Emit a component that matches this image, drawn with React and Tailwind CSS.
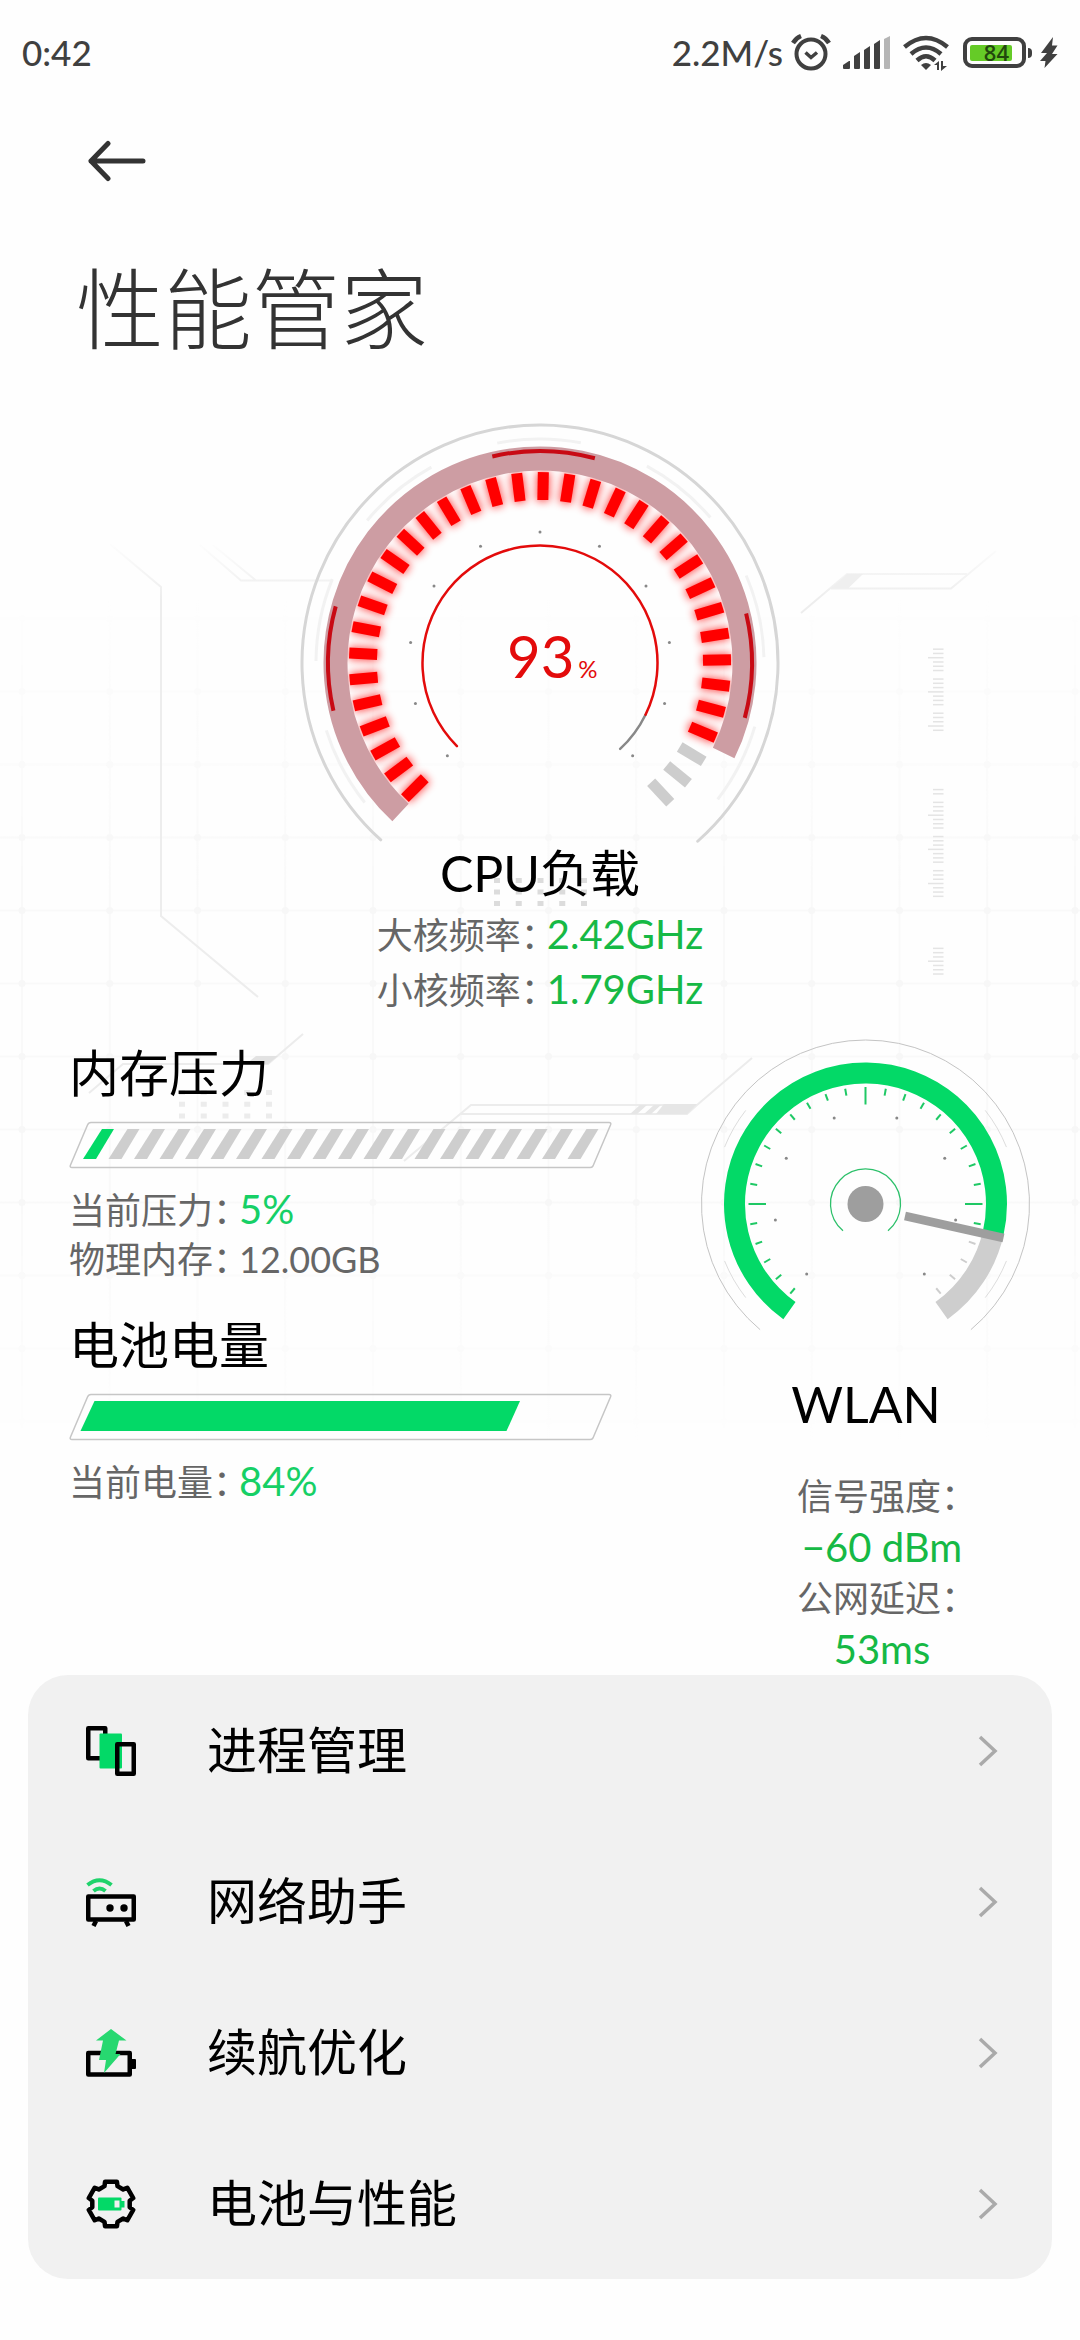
import React from 'react';

// angle in degrees, clockwise from twelve o'clock
const polar = (cx, cy, r, deg) => {
    const rad = ((deg - 90) * Math.PI) / 180;
    return [cx + r * Math.cos(rad), cy + r * Math.sin(rad)];
};

const arc = (cx, cy, r, from, to) => {
    const [x1, y1] = polar(cx, cy, r, from);
    const [x2, y2] = polar(cx, cy, r, to);
    return `M${x1} ${y1}A${r} ${r} 0 ${to - from > 180 ? 1 : 0} 1 ${x2} ${y2}`;
};

const range = (n) => Array.from({ length: n }, (_, i) => i);

const StatusBar = () => (
    <div className="flex h-[107px] items-center justify-between px-[22px] pb-0.5 text-[35px] font-medium text-[#404040]">
        <time>0:42</time>
        <div className="flex items-center">
            <span>2.2M/s</span>
            <svg className="ml-2 h-10 w-10" viewBox="0 0 40 40" fill="none" stroke="currentColor" strokeWidth="4">
                <circle cx="20" cy="21" r="14.5" />
                <path d="M14.5 19.5l5.5 5 6-5" strokeWidth="3.5" />
                <path d="M2 10q3-5 8-7M38 10q-3-5-8-7" strokeWidth="4.5" />
            </svg>
            <svg className="ml-3 h-[34px] w-[48px]" viewBox="0 0 48 34" fill="currentColor">
                <path d="M0 32v-3l6-4h1v7q0 1-1 1H1q-1 0-1-1z" />
                <path d="M11 20l6-4v16q0 1-1 1h-4q-1 0-1-1z" />
                <path d="M21 14l6-4v22q0 1-1 1h-4q-1 0-1-1z" />
                <path d="M31 8l6-4v28q0 1-1 1h-4q-1 0-1-1z" />
                <path d="M41 3l6-3v32q0 1-1 1h-4q-1 0-1-1z" fill="#b5b5b5" />
            </svg>
            <svg className="ml-3 h-[36px] w-[46px]" viewBox="0 0 46 36" fill="none" stroke="currentColor" strokeWidth="4.5">
                <path d="M1.500 12Q23-6 44.500 12" />
                <path d="M8 19Q23 6 38 19" />
                <path d="M14 25.500Q23 17 32 25.500" />
                <path d="M18 30q5-4 10 0l-5 5z" fill="currentColor" stroke="none" />
                <path d="M31 30l5-4v9h-2v-5zM38 26h2v5h4l-6 5z" fill="currentColor" stroke="none" />
            </svg>
            <div className="ml-[14px] flex h-[31px] w-[63px] items-center rounded-[9px] border-4 border-[#404040] p-[3px]">
                <div className="flex h-4 w-[42px] items-center justify-end rounded-[2px] bg-[#65cb27] pr-[3px] font-['Open_Sans'] text-[22px] font-semibold text-[#22480d]">
                    84
                </div>
            </div>
            <div className="ml-[2px] h-2.5 w-1 rounded-r bg-[#404040]"></div>
            <svg className="ml-2 h-[31px] w-[18px]" viewBox="0 0 18 31" fill="currentColor">
                <path d="M13 0L1 16h6L0 24h5.500L4.500 31 17.500 17H12l5.500-8.500H12z" />
            </svg>
        </div>
    </div>
);

const Backdrop = () => {
    const cols = range(13).map((i) => 22 + i * 87.75);
    const rows = range(12).map((i) => 618.500 + i * 73);
    // [first y, last y] of every ruler run, y of one of its long ticks
    const runs = [
        [649, 731, 657.700],
        [789, 897, 815.200],
        [948, 975, 961.200],
    ];
    const step = 4.270;
    const ticks = runs.flatMap(([top, bottom, long]) =>
        range(60)
            .map((i) => i - 30)
            .map((i) => ({ k: ((i % 8) + 8) % 8, y: long + i * step }))
            .filter(({ k, y }) => k !== 4 && y >= top - 1 && y <= bottom + 1)
    );

    return (
        <svg className="absolute left-0 top-0 w-full" viewBox="0 372 1080 1100" fill="none" aria-hidden="true">
            <defs>
                <linearGradient id="fade" x1="0" y1="590" x2="0" y2="1450" gradientUnits="userSpaceOnUse">
                    <stop offset="0" stopColor="#fff" stopOpacity="0" />
                    <stop offset="0.35" stopColor="#fff" />
                    <stop offset="0.7" stopColor="#fff" />
                    <stop offset="1" stopColor="#fff" stopOpacity="0" />
                </linearGradient>
                <mask id="gridMask" maskUnits="userSpaceOnUse" x="0" y="560" width="1080" height="900">
                    <rect x="0" y="560" width="1080" height="900" fill="url(#fade)" />
                </mask>
                <linearGradient id="lineFade" x1="0" y1="540" x2="0" y2="600" gradientUnits="userSpaceOnUse">
                    <stop offset="0" stopColor="#ededed" stopOpacity="0" />
                    <stop offset="1" stopColor="#ededed" />
                </linearGradient>
            </defs>
            <g mask="url(#gridMask)" stroke="#f9f9f9" strokeWidth="2">
                {cols.map((x) => <path key={x} d={`M${x} 600V1440`} />)}
                {rows.map((y) => <path key={y} d={`M0 ${y}H1080`} />)}
                {cols.map((x) => rows.map((y) => <circle key={`${x}-${y}`} cx={x} cy={y} r="3.500" fill="#f7f7f7" stroke="none" />))}
            </g>
            <g stroke="url(#lineFade)" strokeWidth="2">
                <path d="M110 544L161 587V916L258 997" />
                <path d="M200 545L241 580.500H333M213 545L256 580.500" />
                <path d="M801 613L847 574H967M831 588.500H951L996 551" />
            </g>
            <path d="M831 588.500L847 574H863L848 588.500z" fill="#efefef" />
            <g stroke="#ececec" strokeWidth="2">
                <path d="M303 1034L268 1064H123L89 1093" />
                <path d="M404 1161L471 1105H697L752 1058M461 1114H687L697 1105" />
            </g>
            <path d="M256 1056H278L268 1064H246z" fill="#e2e2e2" />
            <path d="M630 1114L640 1105H647L637 1114zM644 1114L654 1105H661L651 1114zM656 1114L664 1104H697L687 1114z" fill="#e6e6e6" />
            {ticks.map(({ k, y }) => (
                <path key={y} d={`M${k === 0 ? 928 : 933} ${y}H943.500`} stroke="#e4e4e4" strokeWidth="1.500" />
            ))}
            {range(15).map((i) => (
                <React.Fragment key={i}>
                    <rect x={494 + (i % 5) * 21.75} y={878 + Math.floor(i / 5) * 11.5} width="6" height="5" fill="#dcdcdc" />
                    <rect x={179 + (i % 5) * 21.75} y={1090 + Math.floor(i / 5) * 11.75} width="6" height="5" fill="#ececec" />
                </React.Fragment>
            ))}
        </svg>
    );
};

const CpuGauge = ({ load }) => {
    const cx = 540;
    const cy = 663;
    const ticks = range(35).map((i) => -135 + i * 8);
    const end = -135 + 270 * (load / 100);
    const faint = [[-128.5, -107.5], [-89.5, -68], [-50.5, -29], [-11, 10.5], [28.5, 49.5], [67, 88.5], [106.5, 127.5]];

    return (
        <div className="relative">
            <svg className="w-[480px]" viewBox="300 423 480 420" fill="none" aria-hidden="true">
                <defs>
                    <filter id="glow" x="300" y="423" width="480" height="420" filterUnits="userSpaceOnUse">
                        <feGaussianBlur stdDeviation="4" />
                    </filter>
                </defs>
                <path d={arc(cx, cy, 238, -138, 138.5)} stroke="#d6d6d6" strokeWidth="3" strokeLinecap="round" />
                {faint.map(([a, b]) => <path key={a} d={arc(cx, cy, 224, a, b)} stroke="#f2f2f2" strokeWidth="3" />)}
                <g filter="url(#glow)" stroke="#ff0000" strokeWidth="13" opacity="0.7">
                    {ticks.slice(0, 32).map((a) => (
                        <path key={a} d={`M${polar(cx, cy, 162, a)}L${polar(cx, cy, 191, a)}`} />
                    ))}
                </g>
                <path d={arc(cx, cy, 204.500, -137, end)} stroke="#cd9da3" strokeWidth="24" />
                {[[-103, -74.5], [-13, 15], [76.5, 105]].map(([a, b]) => (
                    <path key={a} d={arc(cx, cy, 212, a, b)} stroke="#c80a14" strokeWidth="4" />
                ))}
                {ticks.map((a, i) => (
                    <path key={a} d={`M${polar(cx, cy, 163, a)}L${polar(cx, cy, 191, a)}`} stroke={i < 32 ? '#ff0000' : '#cdcdcd'} strokeWidth="11" />
                ))}
                <path d={arc(cx, cy, 117.500, end, 137)} stroke="#888888" strokeWidth="2.500" strokeLinecap="round" />
                <path d={arc(cx, cy, 117.500, -135, end)} stroke="#e30b0b" strokeWidth="2.500" strokeLinecap="round" />
                {range(11).map((i) => {
                    const [x, y] = polar(cx, cy, 131, -135 + i * 27);
                    return <circle key={i} cx={x} cy={y} r="1.500" fill="#888888" />;
                })}
            </svg>
            <p className="absolute left-[207px] top-[198px] flex items-baseline gap-1 text-[58px] leading-[70px] text-[#e30b0b]">
                {load}
                <span className="text-[24px]">%</span>
            </p>
        </div>
    );
};

const WlanGauge = () => {
    const cx = 865.5;
    const cy = 1204;
    return (
        <svg className="w-[332px]" viewBox="700 1039 332 293" fill="none" aria-hidden="true">
            <path d={arc(cx, cy, 164, -140, 140)} stroke="#c4c4c4" strokeWidth="1" />
            {[[-128, -112], [-68, -52], [52, 68], [112, 128]].map(([a, b]) => (
                <path key={a} d={arc(cx, cy, 152, a, b)} stroke="#dddddd" strokeWidth="1" />
            ))}
            <path d={arc(cx, cy, 131, 102, 144.5)} stroke="#cecece" strokeWidth="21" />
            <path d={arc(cx, cy, 131, -144.5, 103)} stroke="#03d967" strokeWidth="21" />
            {range(29).map((i) => {
                const a = -140 + i * 10;
                const inner = a % 90 === 0 ? 99.5 : 110;
                return (
                    <path key={a} d={`M${polar(cx, cy, inner, a)}L${polar(cx, cy, 117, a)}`} stroke={a > 100 ? '#cdcdcd' : '#1fc865'} strokeWidth="2" />
                );
            })}
            {[-140, -100, -60, -20, 20, 60, 100, 140].map((a) => {
                const [x, y] = polar(cx, cy, 91.5, a);
                return <circle key={a} cx={x} cy={y} r="1.500" fill="#888888" />;
            })}
            <circle cx={cx} cy={cy} r="18" fill="#9e9e9e" />
            <path d={arc(cx, cy, 35, -140, 140)} stroke="#2cc06a" strokeWidth="1.250" />
            <path d="M905 1216L1003.500 1238" stroke="#9e9e9e" strokeWidth="8.500" />
        </svg>
    );
};

const BarFrame = ({ children }) => (
    <svg className="mt-[18px] w-[544px]" viewBox="69 0 544 48" fill="none" aria-hidden="true">
        <path d="M91 1.500H609Q611.500 1.500 610.500 4L593 45Q592 46.500 590 46.500H72Q69.500 46.500 70.500 44L87.500 4Q88.500 1.500 91 1.500z" stroke="#c6c6c6" strokeWidth="1.500" />
        {children}
    </svg>
);

const Label = ({ children }) => (
    <dt className="pr-2 text-[36px] text-[#666666] [font-feature-settings:'halt']">{children}：</dt>
);

const Heading = ({ children }) => <h2 className="text-[50px] leading-[60px] text-black">{children}</h2>;

const gear = range(6)
    .flatMap((i) => [polar(25, 25, 19, i * 60 - 20), polar(25, 25, 23, i * 60 - 15), polar(25, 25, 23, i * 60 + 15), polar(25, 25, 19, i * 60 + 20)])
    .join(' ');

const menu = [
    {
        name: '进程管理',
        icon: (
            <>
                <rect x="2.250" y="2.250" width="17" height="30" />
                <rect x="13.500" y="7.500" width="22.500" height="35" rx="1" fill="#03d967" stroke="none" />
                <rect x="31.250" y="18.250" width="16.500" height="29.500" />
            </>
        ),
    },
    {
        name: '网络助手',
        icon: (
            <>
                <path d="M1.500 8Q13.500-1.500 25.500 8M7.500 14Q13.500 9 19.500 14" stroke="#1fd36b" strokeWidth="4" />
                <rect x="2.250" y="19.500" width="45.500" height="23" />
                <path d="M10 44L7.500 49M40 44L42.500 49" />
                <circle cx="24" cy="31" r="3.700" fill="#000" stroke="none" />
                <circle cx="38" cy="31" r="3.700" fill="#000" stroke="none" />
            </>
        ),
    },
    {
        name: '续航优化',
        icon: (
            <>
                <rect x="2.250" y="25" width="41.500" height="21.500" />
                <rect x="45" y="31" width="5" height="10" rx="1" fill="#000" stroke="none" />
                <path d="M25 1L40.500 12.500H33L29.500 26H34.500L18 45L20 32H13L17 12.500H10z" fill="#27d870" stroke="none" />
            </>
        ),
    },
    {
        name: '电池与性能',
        icon: (
            <>
                <polygon points={gear} />
                <rect x="12" y="18.500" width="23.500" height="13" rx="1" fill="#03d967" stroke="none" />
                <rect x="35" y="22" width="3.500" height="6.500" fill="#03d967" stroke="none" />
                <rect x="28.500" y="21.500" width="5" height="7" fill="#f1f1f1" stroke="none" />
            </>
        ),
    },
];

const App = () => {
    return (
        <div className="min-h-screen bg-[#fefefe] pb-[61px] font-['Lato','Noto_Sans_CJK_SC',sans-serif]">
            <StatusBar />
            <header className="px-20">
                <button type="button" aria-label="返回" className="flex h-[107px] items-center px-2">
                    <svg className="h-11 w-[58px]" viewBox="0 0 58 44" fill="none" stroke="#333333" strokeWidth="5" strokeLinecap="round" strokeLinejoin="round">
                        <path d="M55 22H3M20 4.500L3 22l17 17.500" />
                    </svg>
                </button>
                <h1 className="-ml-1 mt-[30px] text-[88px] font-light leading-[128px] text-[#333333]">性能管家</h1>
            </header>

            <main className="relative">
                <Backdrop />
                <section className="relative flex flex-col items-center pt-[51px]">
                    <CpuGauge load={93} />
                    <Heading>CPU负载</Heading>
                    <dl className="mt-1 text-[40px] leading-[55px] text-[#16b945]">
                        <div className="flex h-[55px] items-baseline">
                            <Label>大核频率</Label>
                            <dd>2.42GHz</dd>
                        </div>
                        <div className="flex h-[55px] items-baseline">
                            <Label>小核频率</Label>
                            <dd>1.79GHz</dd>
                        </div>
                    </dl>
                </section>

                <div className="relative mt-[22px] flex items-start justify-between pl-[69px] pr-12">
                    <div className="pt-1">
                        <section>
                            <Heading>内存压力</Heading>
                            <BarFrame>
                                {range(20).map((i) => {
                                    const x = 83 + i * 25.5;
                                    return <path key={i} d={`M${x} 38L${x + 19} 8H${x + 31}L${x + 13} 38z`} fill={i < 1 ? '#03d967' : '#cecece'} />;
                                })}
                            </BarFrame>
                            <dl className="mt-[15px] leading-[50px]">
                                <div className="flex h-[50px] items-baseline">
                                    <Label>当前压力</Label>
                                    <dd className="text-[40px] text-[#16d066]">5%</dd>
                                </div>
                                <div className="flex h-[50px] items-baseline">
                                    <Label>物理内存</Label>
                                    <dd className="text-[36px] text-[#666666]">12.00GB</dd>
                                </div>
                            </dl>
                        </section>
                        <section className="mt-[31px]">
                            <Heading>电池电量</Heading>
                            <BarFrame>
                                <path d="M80.500 38L94.500 8H520L506.500 38z" fill="#03d967" />
                            </BarFrame>
                            <dl className="mt-[15px] flex h-[50px] items-baseline leading-[50px]">
                                <Label>当前电量</Label>
                                <dd className="text-[40px] text-[#16d066]">84%</dd>
                            </dl>
                        </section>
                    </div>

                    <section className="flex flex-col items-center">
                        <WlanGauge />
                        <div className="mt-[42px]">
                            <Heading>WLAN</Heading>
                        </div>
                        <dl className="mt-[37px] flex flex-col items-center pl-8 text-[40px] leading-[51px] text-[#16b945]">
                            <Label>信号强度</Label>
                            <dd>−60 dBm</dd>
                            <Label>公网延迟</Label>
                            <dd>53ms</dd>
                        </dl>
                    </section>
                </div>
            </main>

            <nav className="mx-7 rounded-[40px] bg-[#f1f1f1]">
                {menu.map(({ name, icon }) => (
                    <button key={name} type="button" className="flex h-[151px] w-full items-center pl-[58px] pr-[52px] text-left text-[50px] text-black">
                        <svg className="h-[50px] w-[50px]" viewBox="0 0 50 50" fill="none" stroke="#000" strokeWidth="4.500" strokeLinejoin="round" aria-hidden="true">
                            {icon}
                        </svg>
                        <span className="ml-[71px] flex-1">{name}</span>
                        <svg className="h-8 w-6" viewBox="0 0 24 32" fill="none" stroke="#aaaaaa" strokeWidth="3.500" aria-hidden="true">
                            <path d="M4 2l15 14L4 30" />
                        </svg>
                    </button>
                ))}
            </nav>
        </div>
    );
};

export default App;
